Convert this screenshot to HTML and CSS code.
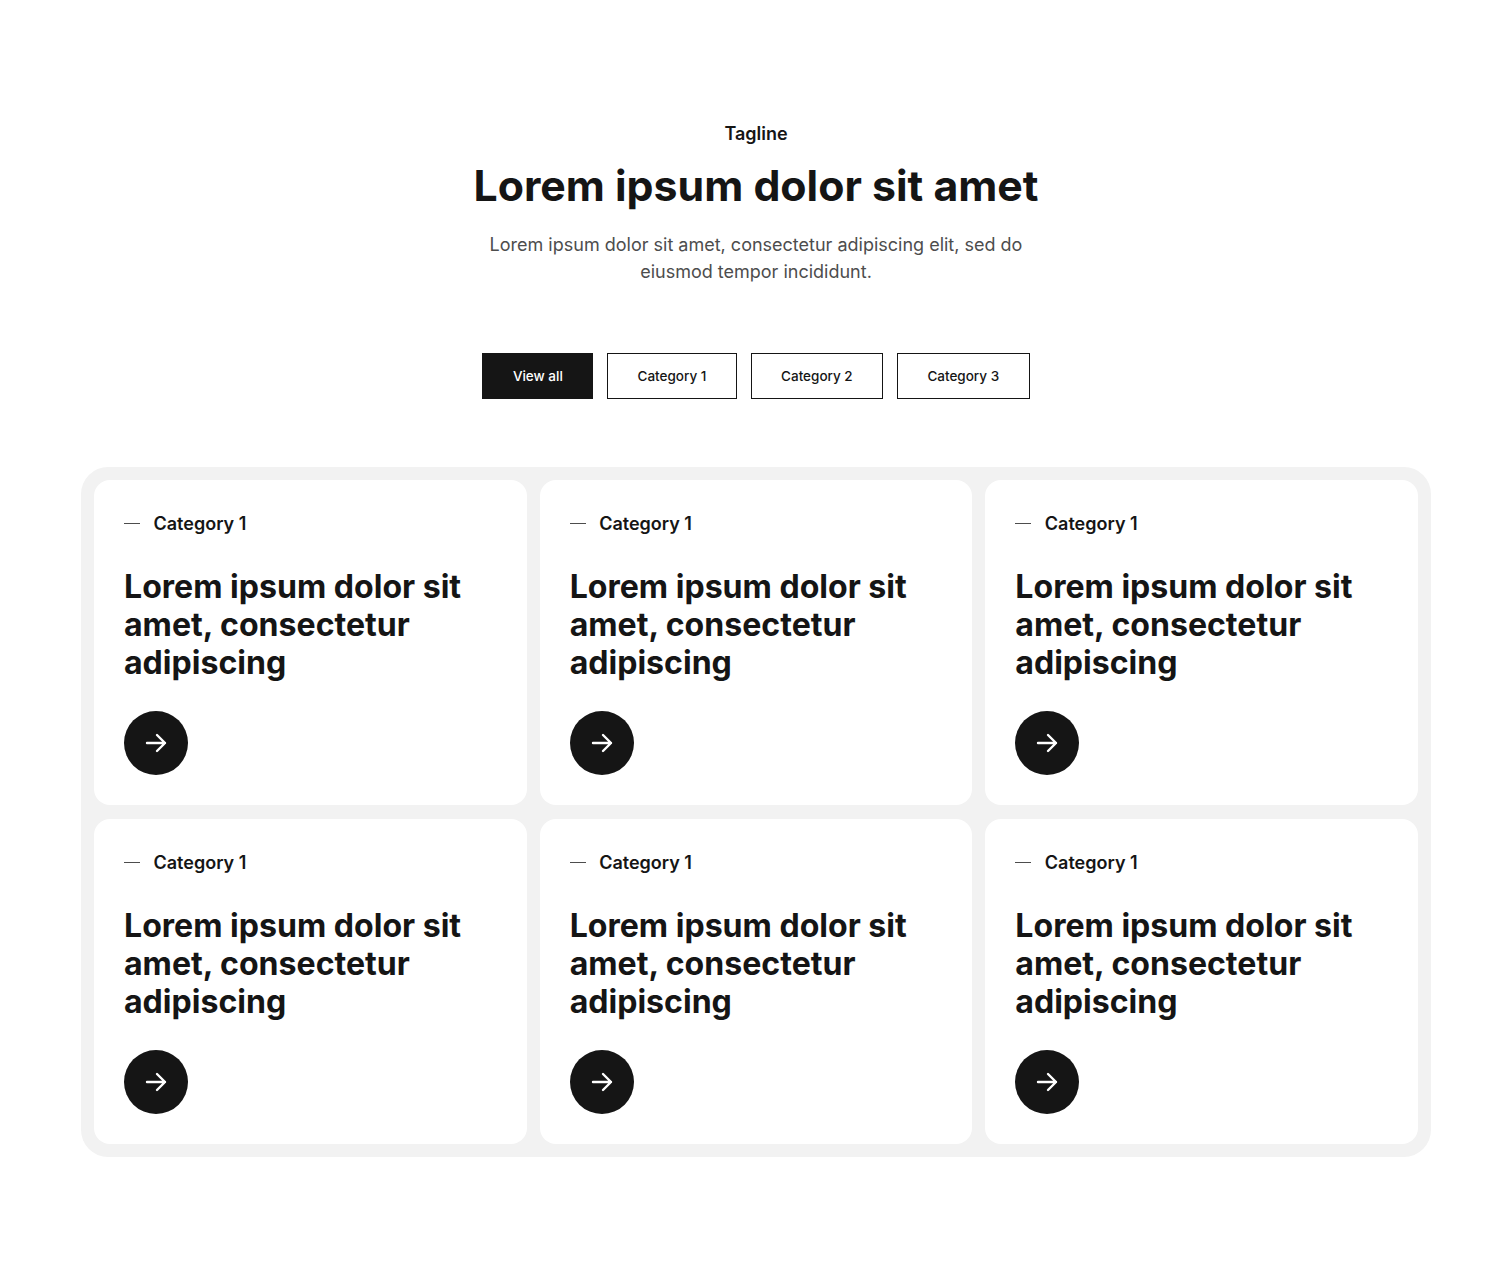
FILE: index.html
```html
<!DOCTYPE html>
<html lang="en">

<head>
    <meta charset="UTF-8">
    <title>Blog</title>
    <link rel="stylesheet" href="styles.css">
</head>

<body>

    <div class="page">

        <!-- heading -->
        <div class="head">
            <p class="tagline">Tagline</p>
            <h1>Lorem ipsum dolor sit amet</h1>
            <p class="lead">Lorem ipsum dolor sit amet, consectetur adipiscing elit, sed do eiusmod tempor incididunt.</p>
        </div>

        <!-- filter buttons -->
        <div class="tabs">
            <a class="tab current">View all</a>
            <a class="tab">Category 1</a>
            <a class="tab">Category 2</a>
            <a class="tab">Category 3</a>
        </div>

        <!-- cards -->
        <div class="panel">
            <div class="card">
                <div class="cat"><span class="dash"></span>Category 1</div>
                <h2>Lorem ipsum dolor sit amet, consectetur adipiscing</h2>
                <a class="go"><svg width="24" height="24" viewBox="0 0 24 24" fill="none" stroke="#fff" stroke-width="2.4" stroke-linecap="round" stroke-linejoin="round"><path d="M3 12h18M13 4l8 8-8 8"/></svg></a>
            </div>
            <div class="card">
                <div class="cat"><span class="dash"></span>Category 1</div>
                <h2>Lorem ipsum dolor sit amet, consectetur adipiscing</h2>
                <a class="go"><svg width="24" height="24" viewBox="0 0 24 24" fill="none" stroke="#fff" stroke-width="2.4" stroke-linecap="round" stroke-linejoin="round"><path d="M3 12h18M13 4l8 8-8 8"/></svg></a>
            </div>
            <div class="card">
                <div class="cat"><span class="dash"></span>Category 1</div>
                <h2>Lorem ipsum dolor sit amet, consectetur adipiscing</h2>
                <a class="go"><svg width="24" height="24" viewBox="0 0 24 24" fill="none" stroke="#fff" stroke-width="2.4" stroke-linecap="round" stroke-linejoin="round"><path d="M3 12h18M13 4l8 8-8 8"/></svg></a>
            </div>
            <div class="card">
                <div class="cat"><span class="dash"></span>Category 1</div>
                <h2>Lorem ipsum dolor sit amet, consectetur adipiscing</h2>
                <a class="go"><svg width="24" height="24" viewBox="0 0 24 24" fill="none" stroke="#fff" stroke-width="2.4" stroke-linecap="round" stroke-linejoin="round"><path d="M3 12h18M13 4l8 8-8 8"/></svg></a>
            </div>
            <div class="card">
                <div class="cat"><span class="dash"></span>Category 1</div>
                <h2>Lorem ipsum dolor sit amet, consectetur adipiscing</h2>
                <a class="go"><svg width="24" height="24" viewBox="0 0 24 24" fill="none" stroke="#fff" stroke-width="2.4" stroke-linecap="round" stroke-linejoin="round"><path d="M3 12h18M13 4l8 8-8 8"/></svg></a>
            </div>
            <div class="card">
                <div class="cat"><span class="dash"></span>Category 1</div>
                <h2>Lorem ipsum dolor sit amet, consectetur adipiscing</h2>
                <a class="go"><svg width="24" height="24" viewBox="0 0 24 24" fill="none" stroke="#fff" stroke-width="2.4" stroke-linecap="round" stroke-linejoin="round"><path d="M3 12h18M13 4l8 8-8 8"/></svg></a>
            </div>
        </div>

    </div>

</body>

</html>
```

FILE: styles.css
```css
* {
    padding: 0;
    margin: 0;
    box-sizing: border-box;
}

body {
    background: #fff;
    color: #151515;
    font-family: Inter, "Liberation Sans", sans-serif;
}

.page {
    padding: 120px 81px;
}

.head {
    text-align: center;
}

.tagline {
    font-size: 18px;
    line-height: 27px;
    font-weight: 600;
}

h1 {
    margin-top: 12px;
    font-size: 42.8px;
    line-height: 53px;
    font-weight: 700;
}

.lead {
    width: 560px;
    margin: 19px auto 0;
    font-size: 18px;
    line-height: 27px;
    color: #4d4d4d;
}

.tabs {
    display: flex;
    justify-content: center;
    gap: 13.5px;
    margin-top: 68px;
}

.tab {
    height: 46px;
    padding: 0 29.6px;
    border: 1px solid #151515;
    font-size: 13.5px;
    line-height: 44px;
    font-weight: 500;
}

.tab.current {
    background: #151515;
    color: #fff;
}

.panel {
    display: grid;
    grid-template-columns: repeat(3, 1fr);
    gap: 13.5px 13px;
    margin-top: 68px;
    padding: 13px;
    background: #f2f2f2;
    border-radius: 27px;
}

.card {
    padding: 30px;
    background: #fff;
    border-radius: 16px;
}

.cat {
    display: flex;
    align-items: center;
    gap: 13.5px;
    font-size: 18px;
    line-height: 27px;
    font-weight: 600;
}

.dash {
    width: 16px;
    height: 1px;
    background: #4d4d4d;
}

h2 {
    margin-top: 31px;
    font-size: 32.1px;
    line-height: 38px;
    font-weight: 700;
}

.go {
    display: flex;
    align-items: center;
    justify-content: center;
    width: 64px;
    height: 64px;
    margin-top: 29px;
    background: #151515;
    border-radius: 50%;
}
```
